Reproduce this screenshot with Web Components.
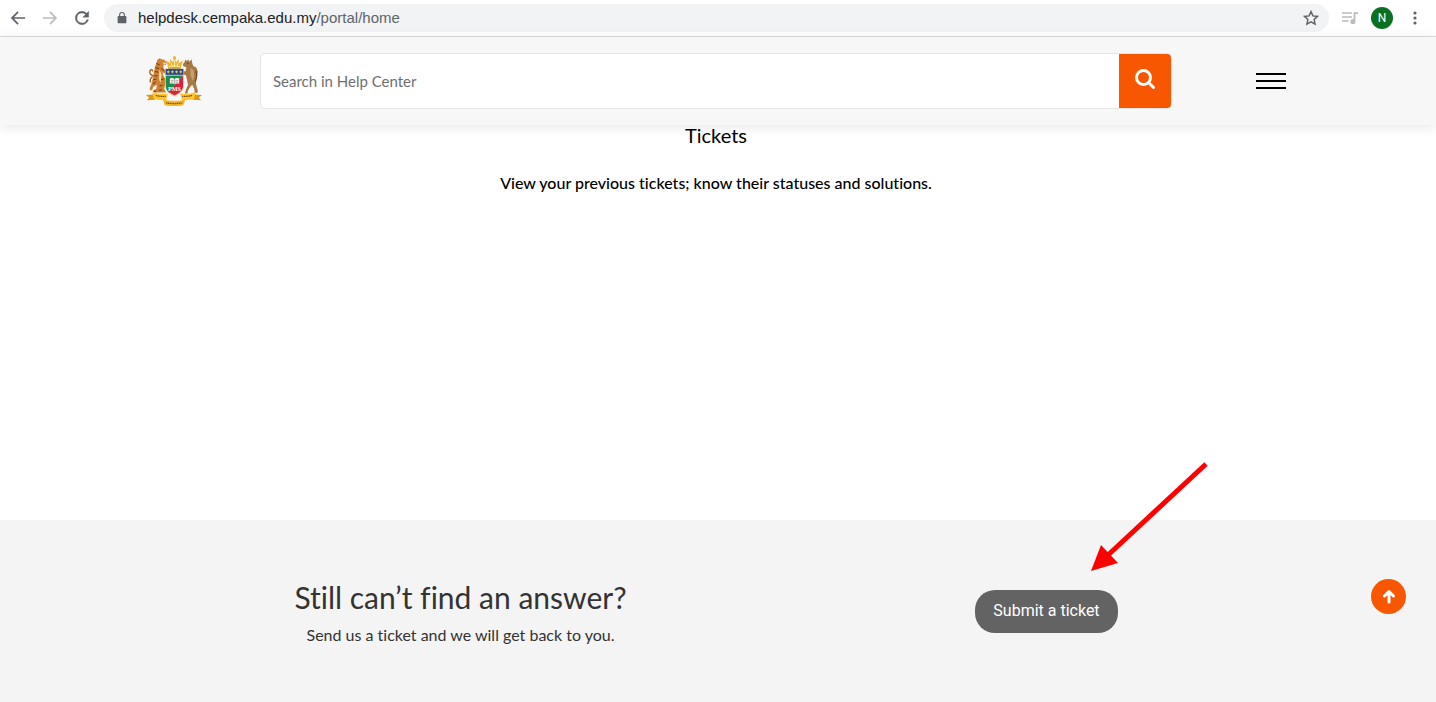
<!DOCTYPE html>
<html lang="en">
<head>
<meta charset="utf-8">
<title>Help Center</title>
<style>
    body {
        margin: 0;
        min-height: 100vh;
        display: flex;
        flex-direction: column;
        background: #fff;
        color: #000;
        font-family: Lato, "Liberation Sans", sans-serif;
        font-variant-ligatures: none;
        --accent: #f75700;
        --grey-text: #5f6368;
    }
    main {
        flex: 1;
    }
</style>
</head>
<body>
    <browser-bar host="helpdesk.cempaka.edu.my" path="/portal/home" user="N"></browser-bar>
    <portal-header>
        <school-crest slot="logo"></school-crest>
        <search-box slot="search" placeholder="Search in Help Center"></search-box>
        <menu-button slot="menu"></menu-button>
    </portal-header>
    <main>
        <portal-section>
            <span slot="title">Tickets</span>
            View your previous tickets; know their statuses and solutions.
        </portal-section>
    </main>
    <ticket-banner>
        <span slot="title">Still can’t find an answer?</span>
        <span slot="text">Send us a ticket and we will get back to you.</span>
        <submit-button slot="action">Submit a ticket</submit-button>
    </ticket-banner>
    <scroll-top></scroll-top>

<script>
class BrowserBar extends HTMLElement {
    constructor() {
        super();
        this.attachShadow({mode: 'open'});
    }

    connectedCallback() {
        this.shadowRoot.innerHTML = `
        <style>
            :host {
                display: flex;
                align-items: center;
                gap: 12px;
                height: 36px;
                padding: 0 11px 0 8px;
                border-bottom: 1px solid #dadce0;
                background: #fff;
                color: var(--grey-text);
            }
            button {
                display: flex;
                padding: 0;
                border: 0;
                background: none;
                color: inherit;
            }
            button:disabled {
                color: #babcbe;
            }
            svg {
                display: block;
                fill: currentColor;
            }
            .address {
                flex: 1;
                display: flex;
                align-items: center;
                gap: 9px;
                height: 28px;
                padding: 0 10px 0 11px;
                border-radius: 14px;
                background: #f1f3f4;
            }
            .url {
                flex: 1;
                font: 15px/20px "Liberation Sans", Arial, sans-serif;
            }
            .host {
                color: #202124;
            }
            .user {
                width: 22px;
                height: 22px;
                justify-content: center;
                align-items: center;
                border-radius: 50%;
                background: #0b7020;
                color: #fff;
                font: 12px/22px Roboto, sans-serif;
            }
        </style>
        <button aria-label="Back"><svg width="20" height="20" viewBox="0 0 24 24"><path d="M20.500 11H7.200l5.600-5.600L11.400 4l-8 8 8 8 1.400-1.400L7.200 13h13.300z"/></svg></button>
        <button aria-label="Forward" disabled><svg width="20" height="20" viewBox="0 0 24 24"><path d="M3.500 11h13.300l-5.600-5.600L12.600 4l8 8-8 8-1.400-1.400 5.600-5.600H3.500z"/></svg></button>
        <button aria-label="Reload"><svg width="20" height="20" viewBox="0 0 24 24"><path d="M17.650 6.350A8 8 0 1 0 19.730 14h-2.080A6 6 0 1 1 12 6c1.660 0 3.140.69 4.220 1.780L13 11h7V4z" stroke="currentColor" stroke-width=".5"/></svg></button>
        <div class="address">
            <svg width="14" height="14" viewBox="0 0 24 24"><path d="M18 8.500h-1V6.500a5 5 0 0 0-10 0v2H6a1.500 1.500 0 0 0-1.500 1.500v9.500A1.500 1.500 0 0 0 6 21h12a1.500 1.500 0 0 0 1.500-1.500V10A1.500 1.500 0 0 0 18 8.500zM8.900 6.500a3.100 3.100 0 0 1 6.200 0v2H8.900z"/></svg>
            <div class="url"><span class="host">${this.getAttribute('host')}</span>${this.getAttribute('path')}</div>
            <button aria-label="Bookmark"><svg width="16" height="16" viewBox="0 0 24 24"><path d="M12 2.500l2.900 6.300 6.900.8-5.100 4.700 1.400 6.800-6.100-3.400-6.100 3.400 1.400-6.800-5.100-4.700 6.900-.8z" fill="none" stroke="currentColor" stroke-width="2.200"/></svg></button>
        </div>
        <button aria-label="Media" disabled><svg width="18" height="16" viewBox="0 0 18 16"><path d="M1 2.200h10v1.600H1zM1 6.200h10v1.600H1zM1 10.200h6.500v1.600H1zM12.600 2.200H17v1.800h-2.600v7.500a2.500 2.500 0 1 1-1.800-2.300z"/></svg></button>
        <button class="user" aria-label="Profile">${this.getAttribute('user')}</button>
        <button aria-label="More"><svg width="20" height="20" viewBox="0 0 20 20"><circle cx="10" cy="5" r="1.600"/><circle cx="10" cy="10" r="1.600"/><circle cx="10" cy="15" r="1.600"/></svg></button>
        `;
    }
}
customElements.define('browser-bar', BrowserBar);

class PortalHeader extends HTMLElement {
    constructor() {
        super();
        this.attachShadow({mode: 'open'}).innerHTML = `
        <style>
            :host {
                display: block;
                position: sticky;
                top: 0;
                z-index: 1;
                padding: 16px 28px 16px 24px;
                background: #f7f7f7;
                box-shadow: 0 2px 12px rgba(0, 0, 0, .1);
            }
            header {
                display: flex;
                align-items: center;
                max-width: 1140px;
                margin: 0 auto;
            }
            .search {
                flex: 1;
                margin: 0 84px 0 58px;
            }
        </style>
        <header>
            <slot name="logo"></slot>
            <div class="search"><slot name="search"></slot></div>
            <slot name="menu"></slot>
        </header>
        `;
    }
}
customElements.define('portal-header', PortalHeader);

class SchoolCrest extends HTMLElement {
    constructor() {
        super();
        this.attachShadow({mode: 'open'}).innerHTML = `
        <style>
            :host {
                display: block;
                width: 56px;
                height: 50px;
            }
            svg {
                display: block;
            }
        </style>
        <svg width="56" height="50" viewBox="1 1 54 48" role="img" aria-label="School crest">
            <!-- tiger -->
            <path d="M12 4.500l2-1.500 2 1 2.500.5 2.500 3-1 2-2.500.5.500 3 2.500 3-1 2-2.500-1.500 1 4 2.500 3-.5 4-1.500 5 2 3.500H9l-1-2 3-1.500.5-4-3.500 2-1 3.500H5l-.5-2 2-4.500 1-5 1-6 1.500-6z" fill="#cf8030"/>
            <path d="M8 20c-3-1-4-3-3-5s3-.5 2 .8M7.500 20.500c-2.500 2-3 4-2 6" fill="none" stroke="#a86020" stroke-width="1.300"/>
            <path d="M11 8l3 1.500M10 12l3.500 1M9.500 16l3.500.5M9 20h3M8 24l3-1M7.500 28l3-2M14 30l3-1M13.500 34l3-.5M15 24l3-1M16 13l2.500 2M8 35h3" stroke="#453016" stroke-width=".8"/>
            <path d="M17 7l3.500 1-2 1.500zM14 14l2 5-1 8-1.500-4z" fill="#f7dfaa"/>
            <!-- mousedeer -->
            <path d="M38.500 4.500l2 1 1.500-1 1 2 2-2.500.5 3.500 1 3 3 1.500 1.500 4-1 6-1 5 1 4 1 3.500-.5 2h-2.500l-.5-4-2-4-2.500 3-1.500 3-.5 2.500h-2.500l1-3.500 2-5-1-5-1-4-3-1-1.500-2.500 1-1.200 3 1 1-4-3-1-.5-2 2-2.500z" fill="#a77a45"/>
            <path d="M44 12l3 3 .5 6-1.500 4-2-5z" fill="#c9a071"/>
            <path d="M49 15l1 5-1.500 6M40.500 7.500l1.500.8" fill="none" stroke="#694520" stroke-width="1"/>
            <!-- shield -->
            <path d="M19.500 13h18v16.500c0 5-4 8-9 10.500-5-2.500-9-5.500-9-10.500z" fill="#d9c9a0"/>
            <path d="M20.300 20v10c0 3 1.500 5 3.700 6.500L36.700 20z" fill="#178e4d"/>
            <path d="M36.700 20v9.500c0 4.300-3.700 7-8.200 9.300-2-1-3.700-2-5-3.300z" fill="#d9223b"/>
            <path d="M20 13.500h17v5.500H20z" fill="#23488f"/>
            <path d="M21 16.200l1.500-1.600 1.500 1.600-1.500 1.600zM25 16.200l1.500-1.600 1.500 1.600-1.500 1.600zM29 16.200l1.500-1.600 1.500 1.600-1.500 1.600zM33 16.200l1.500-1.600 1.500 1.600-1.500 1.600z" fill="#d5c465"/>
            <path d="M24 22.500c2-.8 3.500-.5 4.500.5 1-1 2.500-1.300 4.500-.5v5.200c-2-.6-3.500-.4-4.500.4-1-.8-2.500-1-4.500-.4z" fill="#f5ede9"/>
            <path d="M28.500 23v5M25 24.500h2.500M29.500 24.500H32M25 26.200h2.500M29.500 26.200H32" stroke="#8f8f8f" stroke-width=".6"/>
            <text x="28.500" y="34.500" text-anchor="middle" font-family="Liberation Serif, serif" font-weight="700" font-size="6" fill="#fff">PMS</text>
            <!-- crown -->
            <path d="M22.500 12.500L20.300 5l4.200 3-.2-4.500 2.700 3.300L28.500 1.500l1.500 5.300 2.700-3.300-.2 4.500 4.200-3-2.200 7.500z" fill="#e9b63a"/>
            <circle cx="28.500" cy="2.500" r="1.500" fill="#e9b63a"/>
            <path d="M23 11.300c4-1 7-1 11 0M28.500 5v6M25.300 8l.7 3M31.700 8l-.7 3" fill="none" stroke="#fff0a7" stroke-width=".9"/>
            <path d="M22.500 12.700h12" stroke="#a27518" stroke-width=".8"/>
            <!-- ribbon -->
            <path d="M1 38.500l7-.5 2 5-8 .5 2-2.500zM55 38.500l-7-.5-2 5 8 .5-2-2.500z" fill="#d79a18"/>
            <path d="M7 35.500c5 1.800 10 2 15 1.500l-1.500 6c-4.500.8-8.500.3-12-1zM49 35.500c-5 1.800-10 2-15 1.500l1.500 6c4.500.8 8.500.3 12-1z" fill="#ffc62d"/>
            <path d="M17 42.500c7 2.200 16 2.200 22 0l-2 6c-6 1.500-13 1.500-18 0z" fill="#f8b923"/>
            <path d="M10.500 38.800c3 .9 6 1.200 9.500 1M45.500 38.800c-3 .9-6 1.200-9.500 1M20.500 46c5 1 11 1 15.500 0" fill="none" stroke="#725018" stroke-width="1.300" stroke-dasharray="1.200 .5"/>
        </svg>
        `;
    }
}
customElements.define('school-crest', SchoolCrest);

class SearchBox extends HTMLElement {
    constructor() {
        super();
        this.attachShadow({mode: 'open'});
    }

    connectedCallback() {
        const placeholder = this.getAttribute('placeholder');
        this.shadowRoot.innerHTML = `
        <style>
            :host {
                display: block;
            }
            form {
                display: flex;
                height: 54px;
                border: 1px solid #e5e5e5;
                border-radius: 5px;
                background: #fff;
                overflow: hidden;
            }
            input {
                flex: 1;
                min-width: 0;
                padding: 0 12px;
                border: 0;
                outline: 0;
                background: none;
                font: 15px/20px Lato, sans-serif;
            }
            input::placeholder {
                color: #6f6f6f;
            }
            button {
                width: 52px;
                display: flex;
                justify-content: center;
                align-items: center;
                padding: 0 0 4px;
                border: 0;
                background: var(--accent);
            }
        </style>
        <form onsubmit="return false">
            <input type="text" aria-label="${placeholder}" placeholder="${placeholder}">
            <button aria-label="Search">
                <svg width="20" height="20" viewBox="0 0 20 20" fill="none" stroke="#fff" stroke-linecap="round">
                    <circle cx="8.500" cy="8.500" r="7" stroke-width="3"/>
                    <path d="M13.800 13.800l4.700 4.700" stroke-width="3"/>
                </svg>
            </button>
        </form>
        `;
    }
}
customElements.define('search-box', SearchBox);

class MenuButton extends HTMLElement {
    constructor() {
        super();
        this.attachShadow({mode: 'open'}).innerHTML = `
        <style>
            :host {
                display: block;
            }
            button {
                display: flex;
                flex-direction: column;
                gap: 5px;
                width: 30px;
                padding: 0;
                border: 0;
                background: none;
            }
            span {
                width: 100%;
                height: 2px;
                background: #000;
            }
        </style>
        <button aria-label="Menu"><span></span><span></span><span></span></button>
        `;
    }
}
customElements.define('menu-button', MenuButton);

class PortalSection extends HTMLElement {
    constructor() {
        super();
        this.attachShadow({mode: 'open'}).innerHTML = `
        <style>
            :host {
                display: block;
                padding: 0 28px 0 24px;
                text-align: center;
            }
            h2 {
                margin: 0 0 28px;
                font-size: 20px;
                line-height: 20px;
                font-weight: 400;
            }
            p {
                margin: 0;
                font-size: 16px;
                line-height: 20px;
                font-weight: 500;
            }
        </style>
        <h2><slot name="title"></slot></h2>
        <p><slot></slot></p>
        `;
    }
}
customElements.define('portal-section', PortalSection);

class TicketBanner extends HTMLElement {
    constructor() {
        super();
        this.attachShadow({mode: 'open'}).innerHTML = `
        <style>
            :host {
                display: block;
                padding: 57px 24px 57px 0;
                background: #f4f4f4;
                color: #333;
            }
            section {
                display: flex;
                justify-content: space-around;
                align-items: center;
                max-width: 1172px;
                margin: 0 auto;
            }
            .message {
                text-align: center;
            }
            h2 {
                margin: 0 0 8px;
                font-size: 30px;
                line-height: 40px;
                font-weight: 400;
            }
            p {
                margin: 0;
                font-size: 16px;
                line-height: 20px;
            }
        </style>
        <section>
            <div class="message">
                <h2><slot name="title"></slot></h2>
                <p><slot name="text"></slot></p>
            </div>
            <slot name="action"></slot>
        </section>
        `;
    }
}
customElements.define('ticket-banner', TicketBanner);

class SubmitButton extends HTMLElement {
    constructor() {
        super();
        this.attachShadow({mode: 'open'}).innerHTML = `
        <style>
            :host {
                display: block;
                position: relative;
            }
            button {
                display: block;
                padding: 11px 18px 12px;
                border: 0;
                border-radius: 20px;
                background: #636363;
                color: #fff;
                font: 16px/20px Roboto, "Liberation Sans", sans-serif;
            }
            /* pointer over the page, its tip just above the button */
            svg {
                position: absolute;
                right: -92px;
                bottom: calc(100% + 18px);
                pointer-events: none;
            }
        </style>
        <button><slot></slot></button>
        <svg width="120" height="112" viewBox="0 0 120 112" aria-hidden="true">
            <path d="M116 4L17 96" stroke="#f00" stroke-width="5"/>
            <path d="M1 111L11 85l17 18z" fill="#f00"/>
        </svg>
        `;
    }
}
customElements.define('submit-button', SubmitButton);

class ScrollTop extends HTMLElement {
    constructor() {
        super();
        this.attachShadow({mode: 'open'}).innerHTML = `
        <style>
            :host {
                display: block;
                position: fixed;
                right: 30px;
                bottom: 88px;
            }
            button {
                display: flex;
                justify-content: center;
                align-items: center;
                width: 35px;
                height: 35px;
                padding: 0;
                border: 0;
                border-radius: 50%;
                background: var(--accent);
            }
        </style>
        <button aria-label="Back to top">
            <svg width="14" height="15" viewBox="0 0 14 15" fill="none" stroke="#fff" stroke-width="3" stroke-linejoin="round" stroke-linecap="round">
                <path d="M7 13V3M2.500 7L7 2.500 11.500 7"/>
            </svg>
        </button>
        `;
        this.shadowRoot.querySelector('button').addEventListener('click', () => {
            window.scrollTo(0, 0);
        });
    }
}
customElements.define('scroll-top', ScrollTop);
</script>
</body>
</html>
